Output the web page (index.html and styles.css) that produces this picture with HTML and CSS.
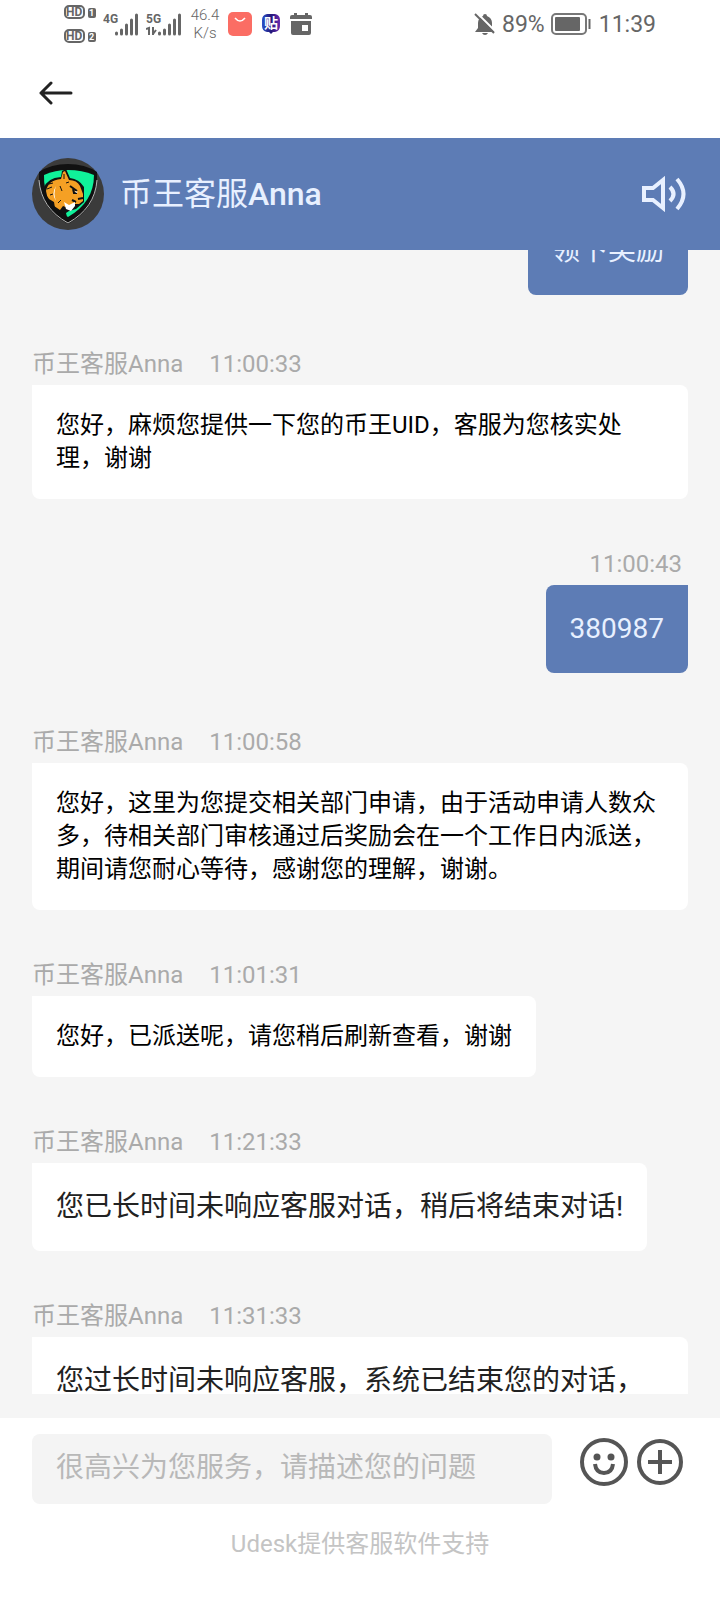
FILE: index.html
```html
<!DOCTYPE html>
<html lang="zh-CN">
  <head>
    <meta charset="UTF-8" />
    <meta name="viewport" content="width=device-width, initial-scale=1.0" />
    <title>币王客服Anna</title>
    <link rel="stylesheet" href="styles.css">
  </head>
  <body>
    <div class="status_bar">
      <svg class="hd" width="32" height="40" viewBox="0 0 32 40">
        <g fill="none" stroke="#666" stroke-width="2">
          <rect x="1" y="2" width="19" height="12" rx="4" />
          <rect x="1" y="26" width="19" height="12" rx="4" />
        </g>
        <g fill="#666">
          <rect x="24" y="4" width="8" height="10" rx="2" />
          <rect x="24" y="28" width="8" height="10" rx="2" />
          <text x="2" y="12" font-size="12" font-weight="700">HD</text>
          <text x="2" y="36" font-size="12" font-weight="700">HD</text>
        </g>
        <g fill="#fff" font-size="9" font-weight="700">
          <text x="25" y="12">1</text>
          <text x="25" y="36">2</text>
        </g>
      </svg>
      <svg class="signal" width="36" height="26" viewBox="0 0 36 26">
        <text class="net" x="0" y="12">4G</text>
        <path d="M13.500 22v1M18.500 19v4M23.500 14v9M28.500 9v14M33.500 4v19" stroke="#666" stroke-width="3" stroke-linecap="round" />
      </svg>
      <svg class="signal" width="36" height="26" viewBox="0 0 36 26">
        <text class="net" x="0" y="12">5G</text>
        <path d="M0 18l3-1v7M7 16v8M7 23l3-4" fill="none" stroke="#666" stroke-width="2" />
        <path d="M13.500 22v1M18.500 19v4M23.500 14v9M28.500 9v14M33.500 4v19" stroke="#666" stroke-width="3" stroke-linecap="round" />
      </svg>
      <div class="speed">46.4<br>K/s</div>
      <svg class="app" width="24" height="24" viewBox="0 0 24 24">
        <rect width="24" height="24" rx="5" fill="#fb6d64" />
        <path d="M7 6q5 6 10 0" fill="none" stroke="#fff" stroke-width="1.500" />
      </svg>
      <svg class="app" width="20" height="24" viewBox="0 0 20 24">
        <defs>
          <linearGradient id="tie" x1="0" y1="0" x2="1" y2="0">
            <stop offset="0" stop-color="#2a50c8" />
            <stop offset="0.500" stop-color="#24187a" />
            <stop offset="1" stop-color="#6a2bb0" />
          </linearGradient>
        </defs>
        <path d="M6 2h8q5 1 5 6v6q0 5-5 6h-2l-2 2-2-2H6q-5-1-5-6V8q0-5 5-6z" fill="url(#tie)" />
        <text x="3" y="16" font-size="14" font-weight="700" fill="#fff">贴</text>
      </svg>
      <svg class="app" width="22" height="24" viewBox="0 0 22 24">
        <path d="M2 3h2V1h3v2h8V1h3v2h2q2 0 2 2v2H0V5q0-2 2-2z" fill="#666" />
        <path d="M1 9h20v12q0 2-2 2H3q-2 0-2-2zM12 13v6h6v-6z" fill="#666" fill-rule="evenodd" />
      </svg>
      <div class="status_right">
        <svg width="22" height="24" viewBox="0 0 22 24">
          <path d="M11 2q2 0 2 2 5 2 5 7v5l3 4H1l3-4v-5q0-5 5-7 0-2 2-2zM8 21h6q-1 2-3 2t-3-2z" fill="#666" />
          <path d="M3 1l19 19" stroke="#fff" stroke-width="2" />
          <path d="M1 2l19 19" stroke="#666" stroke-width="2" />
        </svg>
        <span class="percent">89%</span>
        <svg class="battery" width="40" height="22" viewBox="0 0 40 22">
          <rect x="1" y="1" width="34" height="20" rx="4" fill="none" stroke="#777" stroke-width="2" />
          <rect x="4" y="4" width="25" height="14" rx="1" fill="#666" />
          <path d="M38.500 6v10" stroke="#666" stroke-width="2" />
        </svg>
        <span>11:39</span>
      </div>
    </div>
    <nav class="top_nav">
      <button type="button" aria-label="返回">
        <svg width="36" height="24" viewBox="0 0 36 24">
          <path d="M13 2L3 12l10 10M3 12h30" fill="none" stroke="#222" stroke-width="3" stroke-linecap="round" stroke-linejoin="round" />
        </svg>
      </button>
    </nav>
    <header class="agent">
      <svg class="avatar" width="72" height="72" viewBox="0 0 72 72">
        <circle cx="36" cy="36" r="36" fill="#3b3b3b" />
        <path d="M36 6q17 0 29 8 2 35-29 52Q5 49 7 14q12-8 29-8z" fill="#111" />
        <path d="M7 22q2 28 29 43 27-15 29-43" fill="none" stroke="#b5b5b5" stroke-width="1" />
        <path d="M36 12q14 0 26 5 0 27-26 42Q11 44 12 17q11-5 24-5z" fill="#10f29a" />
        <path d="M12 30q3-10 17-11l1-6 4-2 4 9q9 1 14 9v15l-8 7-7 2-3 2 1 4Q15 49 12 30z" fill="#111" />
        <path d="M14 33q2-11 15-12l2-7 2-1 4 9q8 0 11 6l3 8v7l-4 3h-5l-6 4-5-2-3 4Q15 45 14 33z" fill="#f5a024" />
        <path d="M13 35q1 8 10 15l-1-6-5-3z" fill="#111" />
        <path d="M17 26l4-1M15 31l5-2M18 37l3-1M26 45l3-3M32 16v5M28 28l2 5M34 25l3-1" fill="none" stroke="#111" stroke-width="1" />
        <path d="M38 28l7 5M41 31l1 4h3M46 41l5-1M40 42l4 2" fill="none" stroke="#111" stroke-width="2" />
        <path d="M24 28q-3 8 0 15-5-7 0-15zM43 33l3 1-2 1zM32 44l5 3 6-3v4l-4 5-5-2z" fill="#fff" />
      </svg>
      <h1>币王客服<span>Anna</span></h1>
      <button type="button" aria-label="声音">
        <svg width="46" height="36" viewBox="0 0 46 36">
          <path d="M2 12h9l10-8v28l-10-8H2z" fill="none" stroke="#e8f0ff" stroke-width="4" />
          <path d="M28 11q7 7 0 14M35 3q13 15 0 30" fill="none" stroke="#e8f0ff" stroke-width="4" />
        </svg>
      </button>
    </header>
    <main class="chat">
      <div class="chat_view">
        <ul class="chat_list">
          <li class="mine">
            <p class="bubble">领下奖励</p>
          </li>
          <li>
            <div class="info"><span>币王客服Anna</span><time>11:00:33</time></div>
            <p class="bubble rich">您好，麻烦您提供一下您的币王UID，客服为您核实处理，谢谢</p>
          </li>
          <li class="mine">
            <div class="info"><time>11:00:43</time></div>
            <p class="bubble">380987</p>
          </li>
          <li>
            <div class="info"><span>币王客服Anna</span><time>11:00:58</time></div>
            <p class="bubble rich">您好，这里为您提交相关部门申请，由于活动申请人数众多，待相关部门审核通过后奖励会在一个工作日内派送，期间请您耐心等待，感谢您的理解，谢谢。</p>
          </li>
          <li>
            <div class="info"><span>币王客服Anna</span><time>11:01:31</time></div>
            <p class="bubble rich">您好，已派送呢，请您稍后刷新查看，谢谢</p>
          </li>
          <li>
            <div class="info"><span>币王客服Anna</span><time>11:21:33</time></div>
            <p class="bubble">您已长时间未响应客服对话，稍后将结束对话!</p>
          </li>
          <li>
            <div class="info"><span>币王客服Anna</span><time>11:31:33</time></div>
            <p class="bubble full">您过长时间未响应客服，系统已结束您的对话，</p>
          </li>
        </ul>
      </div>
    </main>
    <footer class="send_box">
      <form class="send_form">
        <textarea rows="1" aria-label="消息" placeholder="很高兴为您服务，请描述您的问题"></textarea>
        <button type="button" aria-label="表情">
          <svg width="48" height="48" viewBox="0 0 48 48">
            <circle cx="24" cy="24" r="22" fill="none" stroke="#555" stroke-width="4" />
            <circle cx="17" cy="19" r="3.500" fill="#555" />
            <circle cx="31" cy="19" r="3.500" fill="#555" />
            <path d="M15 26q1 9 9 9t9-9" fill="none" stroke="#555" stroke-width="4" />
          </svg>
        </button>
        <button type="button" aria-label="更多">
          <svg width="48" height="48" viewBox="0 0 48 48">
            <circle cx="24" cy="24" r="21" fill="none" stroke="#555" stroke-width="4" />
            <path d="M24 12v24M12 24h24" stroke="#555" stroke-width="4" />
          </svg>
        </button>
      </form>
      <p class="support">Udesk提供客服软件支持</p>
    </footer>
  </body>
</html>
```
FILE: styles.css
```css
* {
  margin: 0;
  padding: 0;
  box-sizing: border-box;
}
body {
  display: flex;
  flex-direction: column;
  height: 100vh;
  font-family: Roboto, 'Noto Sans CJK SC', sans-serif;
  background-color: white;
}
button {
  display: flex;
  border: none;
  background: none;
}
svg {
  display: block;
  flex: none;
}
ul {
  list-style: none;
}
.status_bar {
  display: flex;
  align-items: center;
  flex: none;
  height: 48px;
  padding: 0 64px;
  color: #666;
}
.hd {
  margin-right: 7px;
}
.signal {
  margin-right: 7px;
}
.net {
  font-size: 12px;
  font-weight: 700;
  fill: #666;
}
.speed {
  width: 32px;
  margin-right: 7px;
  font-size: 15px;
  font-weight: 300;
  line-height: 18px;
  text-align: center;
}
.app {
  margin-right: 9px;
}
.status_right {
  display: flex;
  align-items: center;
  margin-left: auto;
  font-size: 23px;
}
.percent {
  margin: 0 6px;
}
.battery {
  margin-right: 8px;
}
.top_nav {
  display: flex;
  align-items: center;
  flex: none;
  height: 90px;
  padding: 0 38px;
}
.agent {
  display: flex;
  align-items: center;
  flex: none;
  height: 112px;
  padding: 0 32px;
  color: #e8f0ff;
  background-color: #5d7cb5;
}
.agent h1 {
  flex: 1;
  margin-left: 16px;
  padding-bottom: 6px;
  font-size: 32px;
  font-weight: 400;
}
.agent h1 span {
  font-weight: 500;
}
.chat {
  flex: 1;
  min-height: 0;
  padding: 0 32px 24px;
  background-color: #f5f5f5;
}
.chat_view {
  height: 100%;
  overflow: hidden;
}
/* 第一条消息已滚动到标题栏下方 */
.chat_list {
  margin-top: -43px;
}
.chat_list li {
  display: flex;
  flex-direction: column;
  align-items: flex-start;
  margin-bottom: 51px;
}
.chat_list .mine {
  align-items: flex-end;
  margin-bottom: 55px;
}
.info {
  display: flex;
  gap: 26px;
  margin-bottom: 7px;
  font-size: 24px;
  line-height: 28px;
  color: #aaa;
}
.mine .info {
  padding: 0 6px;
}
.bubble {
  padding: 24px;
  border-radius: 0 8px 8px 8px;
  font-size: 28px;
  line-height: 40px;
  color: #222;
  background-color: white;
}
.mine .bubble {
  border-radius: 8px 0 8px 8px;
  color: #e8f0ff;
  background-color: #5d7cb5;
}
.bubble.rich {
  font-size: 24px;
  line-height: 33px;
  color: black;
}
.bubble.full {
  width: 100%;
}
.send_box {
  flex: none;
  padding: 16px 32px 40px;
}
.send_form {
  display: flex;
  align-items: flex-start;
  padding-right: 4px;
}
.send_form textarea {
  flex: 1;
  height: 70px;
  margin-right: 20px;
  padding: 14px 24px;
  border: none;
  border-radius: 8px;
  font: inherit;
  font-size: 28px;
  line-height: 40px;
  resize: none;
  background-color: #f4f4f4;
}
.send_form textarea::placeholder {
  color: #b8b8b8;
}
.send_form button {
  margin: 4px 0 0 8px;
}
.support {
  margin-top: 24px;
  font-size: 24px;
  line-height: 32px;
  text-align: center;
  color: #c4c4c4;
}
```
